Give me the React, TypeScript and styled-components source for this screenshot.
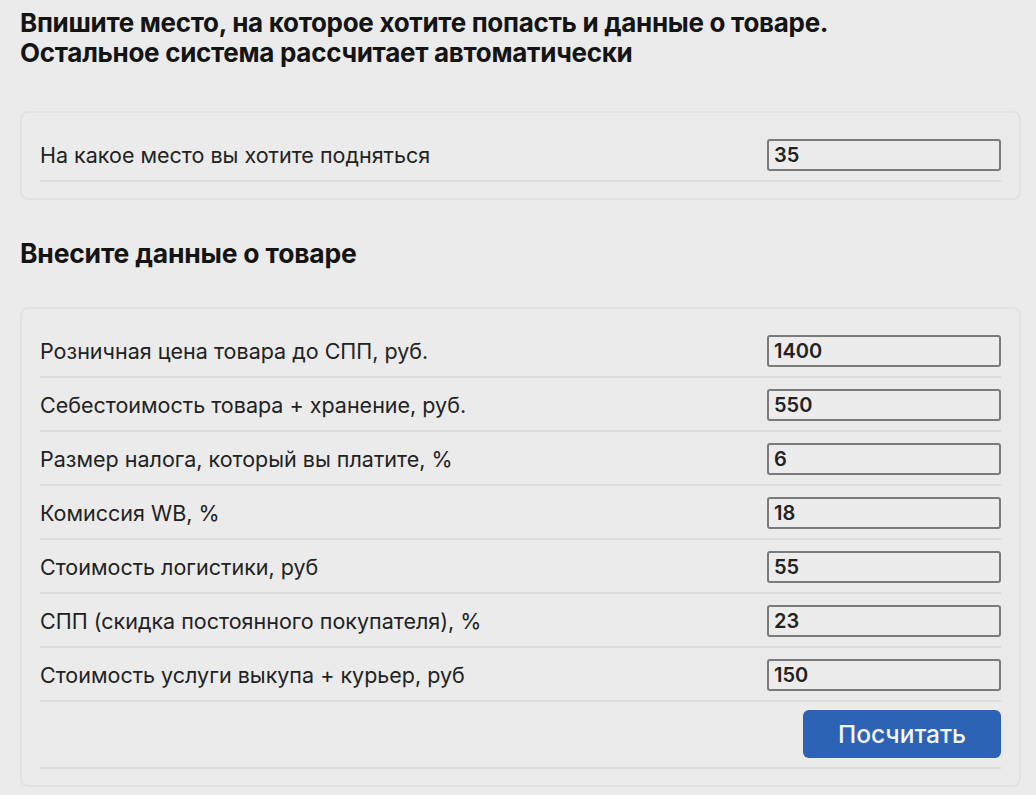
import styled, { createGlobalStyle } from "styled-components";

const GlobalStyle = createGlobalStyle`
  body {
    margin: 0;
    background: #ebebeb;
    font-family: Inter, "Noto Sans", sans-serif;
    color: #1d1d1d;
  }
`;

const ScPage = styled.main`
  padding: 8px 15px 8px 20px;
`;

const ScTitle = styled.h1`
  margin: 0 0 43px;
  font-size: 26px;
  line-height: 30px;
  font-weight: 700;
  letter-spacing: -0.3px;
  color: #141414;
`;

const ScSubtitle = styled.h2`
  margin: 38px 0 39px;
  font-size: 26.5px;
  line-height: 30px;
  font-weight: 700;
  letter-spacing: -0.2px;
  color: #141414;
`;

const ScCard = styled.section`
  border: 2px solid #e2e2e2;
  border-radius: 8px;
  padding: 15px 18px 16px 18px;
`;

const ScRow = styled.div`
  display: flex;
  align-items: center;
  justify-content: space-between;
  padding: 11px 0 9px;
  border-bottom: 2px solid #dcdcdc;
`;

const ScActions = styled(ScRow)`
  justify-content: flex-end;
  padding: 8px 0 9px;
`;

const ScLabel = styled.label`
  font-size: 21.5px;
  line-height: 26px;
  color: #222;
`;

const ScInput = styled.input`
  box-sizing: border-box;
  width: 234px;
  height: 32px;
  padding: 0 5px;
  border: 2px solid #7a7a7a;
  border-radius: 3px;
  background: #ececec;
  font-family: Inter, "Noto Sans", sans-serif;
  font-size: 20px;
  font-weight: 600;
  color: #222;
  outline: none;
`;

const ScButton = styled.button`
  width: 198px;
  height: 48px;
  border: none;
  border-radius: 6px;
  background: #2d63b4;
  color: #f4f6fb;
  font-family: Inter, "Noto Sans", sans-serif;
  font-size: 24.5px;
  font-weight: 500;
  cursor: pointer;
`;

const fields = [
  { label: "Розничная цена товара до СПП, руб.", value: "1400" },
  { label: "Себестоимость товара + хранение, руб.", value: "550" },
  { label: "Размер налога, который вы платите, %", value: "6" },
  { label: "Комиссия WB, %", value: "18" },
  { label: "Стоимость логистики, руб", value: "55" },
  { label: "СПП (скидка постоянного покупателя), %", value: "23" },
  { label: "Стоимость услуги выкупа + курьер, руб", value: "150" },
];

export default function App() {
  return (
    <>
      <GlobalStyle />
      <ScPage>
        <ScTitle>
          Впишите место, на которое хотите попасть и данные о товаре.
          <br />
          Остальное система рассчитает автоматически
        </ScTitle>
        <ScCard>
          <ScRow>
            <ScLabel>На какое место вы хотите подняться</ScLabel>
            <ScInput defaultValue="35" />
          </ScRow>
        </ScCard>
        <ScSubtitle>Внесите данные о товаре</ScSubtitle>
        <ScCard>
          {fields.map((f) => (
            <ScRow key={f.label}>
              <ScLabel>{f.label}</ScLabel>
              <ScInput defaultValue={f.value} />
            </ScRow>
          ))}
          <ScActions>
            <ScButton>Посчитать</ScButton>
          </ScActions>
        </ScCard>
      </ScPage>
    </>
  );
}
